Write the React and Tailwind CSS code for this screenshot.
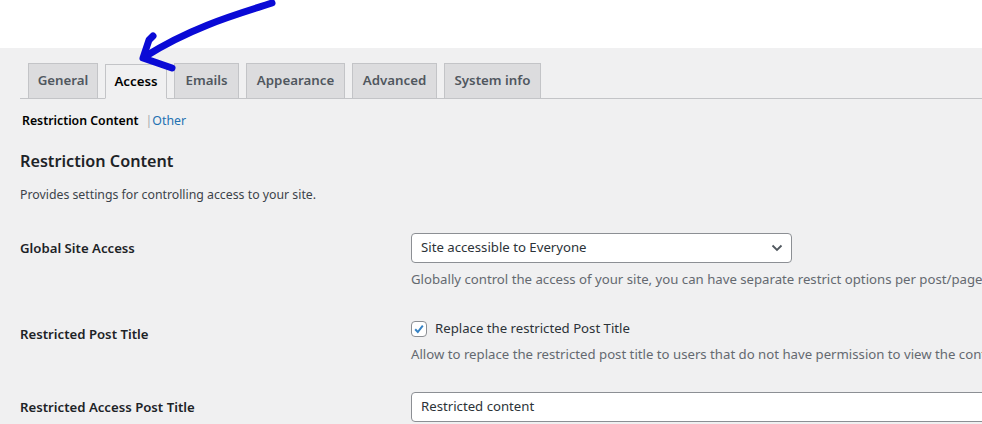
const tabs = [
  { label: "General", w: "w-[70px]" },
  { label: "Access", w: "w-[62px]", active: true },
  { label: "Emails", w: "w-[65px]" },
  { label: "Appearance", w: "w-[99px]" },
  { label: "Advanced", w: "w-[85px]" },
  { label: "System info", w: "w-[97px]" },
];

const Arrow = () => (
  <svg
    className="absolute left-0 top-0 pointer-events-none"
    width="300"
    height="80"
    viewBox="0 0 300 80"
  >
    <g
      fill="none"
      stroke="#0a0ad6"
      strokeWidth="7"
      strokeLinecap="round"
      strokeLinejoin="round"
    >
      <path d="M272 3 C245 12 195 25 146 56" />
      <path d="M153 36 L149 40 L143 58 L172 68" />
    </g>
  </svg>
);

const Tab = ({ label, w, active }) => (
  <div
    className={`${w} h-[35px] flex items-center justify-center border border-[#c3c4c7] text-[13.3px] font-semibold ${
      active
        ? "bg-[#f0f0f1] text-black border-b-[#f0f0f1] -mb-px"
        : "bg-[#dcdcde] text-[#50575e] border-b-0"
    }`}
  >
    {label}
  </div>
);

const Chevron = () => (
  <svg width="12" height="8" viewBox="0 0 12 8">
    <path
      d="M1.5 1.5 L6 6 L10.5 1.5"
      fill="none"
      stroke="#50575e"
      strokeWidth="1.8"
    />
  </svg>
);

export default function App() {
  return (
    <div
      className="relative w-[982px] h-[424px] overflow-hidden bg-[#f0f0f1] text-[#1d2327]"
      style={{ fontFamily: '"Noto Sans", "Open Sans", sans-serif' }}
    >
      <div className="h-[48px] bg-white" />

      {/* tabs */}
      <div className="ml-[20px] mt-[15px] flex items-end gap-[7px] pl-[8px] border-b border-[#c3c4c7]">
        {tabs.map((t) => (
          <Tab key={t.label} {...t} />
        ))}
      </div>

      <div className="px-[20px]">
        {/* sub nav */}
        <div className="mt-[12px] pl-[2px] flex items-center h-[20px] text-[12.3px]">
          <span className="font-semibold text-black">Restriction Content</span>
          <span className="ml-[7px] text-[#a7aaad]">|</span>
          <span className="text-[#2271b1]">Other</span>
        </div>

        <h2 className="mt-[18px] h-[24px] leading-[24px] text-[16.2px] font-semibold">
          Restriction Content
        </h2>
        <p className="mt-[12px] h-[20px] leading-[20px] text-[12.3px] text-[#3c434a]">
          Provides settings for controlling access to your site.
        </p>

        {/* row 1 */}
        <div className="flex">
          <div className="w-[391px] shrink-0 pt-[33px] leading-[20px] text-[13.2px] font-semibold">
            Global Site Access
          </div>
          <div className="pt-[28px]">
            <div className="w-[381px] h-[30px] flex items-center justify-between pl-[9px] pr-[8px] bg-white border border-[#8c8f94] rounded-[4px] text-[13.2px] text-[#2c3338]">
              <span>Site accessible to Everyone</span>
              <Chevron />
            </div>
            <p className="mt-[6px] leading-[20px] text-[13.2px] text-[#646970] whitespace-nowrap">
              Globally control the access of your site, you can have separate
              restrict options per post/page
            </p>
          </div>
        </div>

        {/* row 2 */}
        <div className="flex">
          <div className="w-[391px] shrink-0 pt-[35px] leading-[20px] text-[13.2px] font-semibold">
            Restricted Post Title
          </div>
          <div className="pt-[30px]">
            <div className="flex items-center h-[20px] gap-[8px] text-[13.2px] text-[#2c3338]">
              <span className="w-[16px] h-[16px] flex items-center justify-center bg-white border border-[#8c8f94] rounded-[4px]">
                <svg width="12" height="12" viewBox="0 0 12 12">
                  <path
                    d="M2.2 6.3 L4.8 9 L9.8 2.6"
                    fill="none"
                    stroke="#3582c4"
                    strokeWidth="2"
                  />
                </svg>
              </span>
              <span>Replace the restricted Post Title</span>
            </div>
            <p className="mt-[5px] leading-[20px] text-[13.2px] text-[#646970] whitespace-nowrap">
              Allow to replace the restricted post title to users that do not
              have permission to view the content
            </p>
          </div>
        </div>

        {/* row 3 */}
        <div className="flex">
          <div className="w-[391px] shrink-0 pt-[33px] leading-[20px] text-[13.2px] font-semibold">
            Restricted Access Post Title
          </div>
          <div className="pt-[28px]">
            <div className="w-[600px] h-[30px] flex items-center pl-[9px] bg-white border border-[#8c8f94] rounded-[4px] text-[13.2px] text-[#2c3338]">
              Restricted content
            </div>
          </div>
        </div>
      </div>

      <Arrow />
    </div>
  );
}
